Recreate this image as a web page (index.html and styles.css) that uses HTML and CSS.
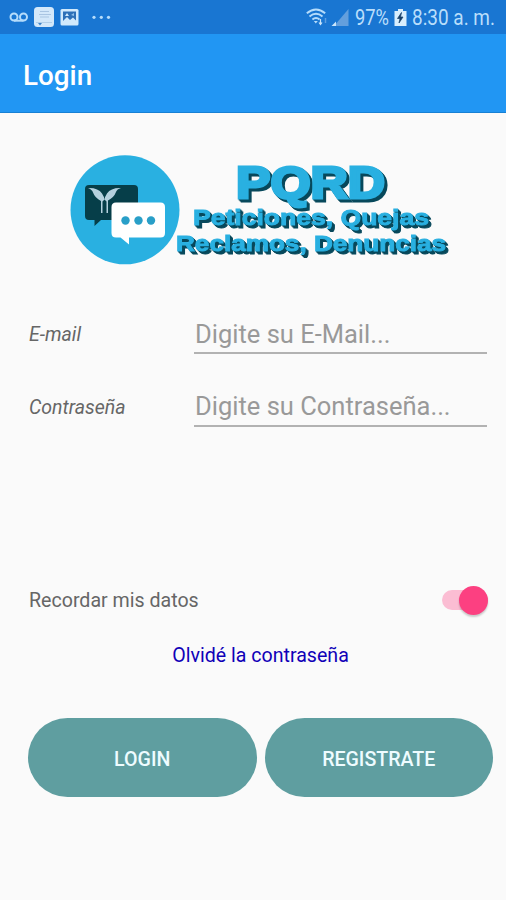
FILE: index.html
```html
<!DOCTYPE html>
<html lang="es">
<head>
<meta charset="utf-8">
<meta name="viewport" content="width=device-width, initial-scale=1">
<title>Login</title>
<link rel="stylesheet" href="styles.css">
</head>
<body>
<header class="status">
  <svg class="status-left" width="120" height="34" viewBox="0 0 120 34" aria-hidden="true">
    <g fill="none" stroke="#b5dcfb" stroke-width="2"><circle cx="14" cy="17" r="3.5"/><circle cx="23.5" cy="17" r="3.5"/><path d="M14 20.7h9.5"/></g>
    <rect x="34" y="7" width="20" height="20" rx="3.5" fill="#d3e8fa"/>
    <path d="M40 11.5h9M39 14.5h12M40 17h9" stroke="#a9c5e2" stroke-width="1.2"/>
    <path d="M36 22.5h16" stroke="#b2cfe9"/><path d="M38 23h4l-2 2.5z" fill="#3e83c9"/>
    <rect x="60.500" y="9" width="18" height="16.500" rx="1.500" fill="#d0e9fc"/>
    <path d="M63 11.500h13v9l-3-3-3 2.500-3-3-4 4z" fill="#2c70b8"/><path d="M65 16l2-3 2 3z" fill="#d0e9fc"/><path d="M71 15l3-2v3z" fill="#8fc0eb"/>
    <g fill="#b5dcfb"><circle cx="94" cy="17.300" r="1.600"/><circle cx="101.300" cy="17.300" r="1.600"/><circle cx="108.500" cy="17.300" r="1.600"/></g>
  </svg>
  <svg class="status-right" width="206" height="34" viewBox="300 0 206 34">
    <g fill="none" stroke="#b5dcfb" stroke-width="1.900"><path d="M306.800 13.300q9.200-7.500 18.400 0M309.500 16.500q6.500-5.500 13 0M312.400 19.400q3.600-3 7.200 0"/></g>
    <path d="M313.800 21h4l-2 2.500z" fill="#b5dcfb"/>
    <path d="M320.500 19v5m-1.500-1.500 1.500 2 1.500-2" fill="none" stroke="#c9e5fb" stroke-width="1.200"/><path d="M325.500 23v-5" stroke="#5d9fe0" stroke-width="1.500"/>
    <path d="M348.500 9v17H334z" fill="#639fdd"/><path d="M336 21.500V26h-4.500z" fill="#c9e5fb"/>
    <text class="status-text" x="355" y="25" textLength="34" lengthAdjust="spacingAndGlyphs">97%</text>
    <path d="M398 9h5v2h3.500v15h-12V11h3.500z" fill="#d8eefd"/><path d="m401.500 12.500-4 6h2.500l-1 4.500 4-6h-2.500z" fill="#173f68" stroke="#173f68" stroke-width=".7"/>
    <text class="status-text" x="412" y="25" textLength="83" lengthAdjust="spacingAndGlyphs">8:30 a. m.</text>
  </svg>
</header>
<div class="appbar"><h1>Login</h1></div>
<main>
  <svg class="logo" width="390" height="120" viewBox="65 150 390 120">
    <circle cx="125" cy="209.800" r="54.500" fill="#29b0e1"/>
    <path d="M89 185h45q4 0 4 4v31h-37l-6.500 6v-6H89q-4 0-4-4v-27q0-4 4-4z" fill="#063e49"/>
    <path d="M88 188q10-.5 14 5.500 2 3 2.500 6 .5-3 2.500-6 4-6 14-5.500-4 1-5 4-2 5.500-8 8.500V213h-1.500v-11.500l-2-2-2 2V213H101v-12q-6-3-8-8.500-1-3-5-4.500z" fill="#b4d0de"/>
    <path d="M116 202.500h44.500q4.500 0 4.500 4.500v26q0 4.500-4.500 4.500h-31.500v7l-8.500-7H116q-4.500 0-4.500-4.500v-26q0-4.500 4.500-4.500z" fill="#fff"/>
    <g fill="#299fc8"><circle cx="125.500" cy="220.500" r="4.200"/><circle cx="138.500" cy="220.500" r="4.200"/><circle cx="151" cy="220.500" r="4.200"/></g>
    <g class="brand">
      <text class="brand-big" x="236" y="198" textLength="149" lengthAdjust="spacingAndGlyphs">PQRD</text>
      <text class="brand-small" x="193" y="225" textLength="236" lengthAdjust="spacingAndGlyphs">Peticiones, Quejas</text>
      <text class="brand-small" x="176" y="251" textLength="270" lengthAdjust="spacingAndGlyphs">Reclamos, Denuncias</text>
    </g>
  </svg>
  <form>
    <div class="row">
      <label for="email">E-mail</label>
      <input id="email" type="email" placeholder="Digite su E-Mail...">
    </div>
    <div class="row">
      <label for="pass">Contraseña</label>
      <input id="pass" type="password" placeholder="Digite su Contraseña...">
    </div>
    <div class="remember"><span>Recordar mis datos</span><span class="switch"><span class="thumb"></span></span></div>
    <a class="forgot">Olvidé la contraseña</a>
    <div class="actions"><button type="button">LOGIN</button><button type="button">REGISTRATE</button></div>
  </form>
</main>
</body>
</html>
```
FILE: styles.css
```css
* { box-sizing: border-box; }
body {
  margin: 0;
  height: 900px;
  overflow: hidden;
  background: #fafafa;
  color: #666;
  font-family: Roboto, "Liberation Sans", sans-serif;
}
.status {
  display: flex;
  justify-content: space-between;
  height: 34px;
  background: #1976d2;
}
.status-text { font: 21.5px Roboto, sans-serif; fill: #b9defb; }
.appbar {
  display: flex;
  align-items: center;
  height: 79px;
  padding: 5px 23px 0;
  background: #2196f3;
  border-bottom: 1px solid #1780d4;
}
h1 {
  margin: 0;
  color: #fff;
  font-size: 27.8px;
  line-height: 32px;
  font-weight: 500;
}
main { padding-top: 37px; }
.logo { display: block; margin-left: 65px; }
.brand {
  font-family: "Liberation Sans", sans-serif;
  font-weight: 700;
  fill: #29b0e1;
  stroke: #29b0e1;
  filter: drop-shadow(1px 1px 0 #07485b) drop-shadow(2px 2px 0 #07485b);
}
.brand-big { font-size: 45px; stroke-width: 3px; }
.brand-small { font-size: 22px; stroke-width: .9px; }
form { padding: 40px 14px 0 28px; }
.row {
  display: flex;
  height: 72.5px;
  padding-right: 5px;
}
label {
  width: 166px;
  padding-top: 13px;
  padding-left: 1px;
  font-size: 19.5px;
  line-height: 24px;
  font-style: italic;
}
input {
  flex: 1;
  min-width: 0;
  height: 44px;
  padding: 5px 0 0 1px;
  border: 0;
  border-bottom: 2px solid #b2b2b2;
  border-radius: 0;
  outline: 0;
  background: transparent;
  font: 25.5px Roboto, sans-serif;
}
input::placeholder { color: #999; opacity: 1; }
.remember {
  display: flex;
  justify-content: space-between;
  align-items: center;
  height: 30px;
  margin: 130px 4px 0 1px;
  font-size: 19.6px;
}
.switch {
  display: flex;
  align-items: center;
  justify-content: flex-end;
  width: 46px;
  height: 20px;
  border-radius: 10px;
  background: #fbbdd3;
}
.thumb {
  width: 29px;
  height: 29px;
  flex: none;
  border-radius: 50%;
  background: #fc4081;
  box-shadow: 0 2px 2px #0003;
}
.forgot {
  display: block;
  width: 465px;
  margin-top: 29px;
  color: #1000b8;
  font-size: 19.6px;
  line-height: 24px;
  text-align: center;
}
.actions {
  display: flex;
  gap: 8px;
  margin: 50px -1px 0 0;
}
button {
  flex: 1 1 0;
  height: 79px;
  padding: 3px 0 0;
  border: 0;
  border-radius: 40px;
  background: #5f9ea0;
  color: #eefcff;
  font: 500 19.6px Roboto, sans-serif;
}
```
